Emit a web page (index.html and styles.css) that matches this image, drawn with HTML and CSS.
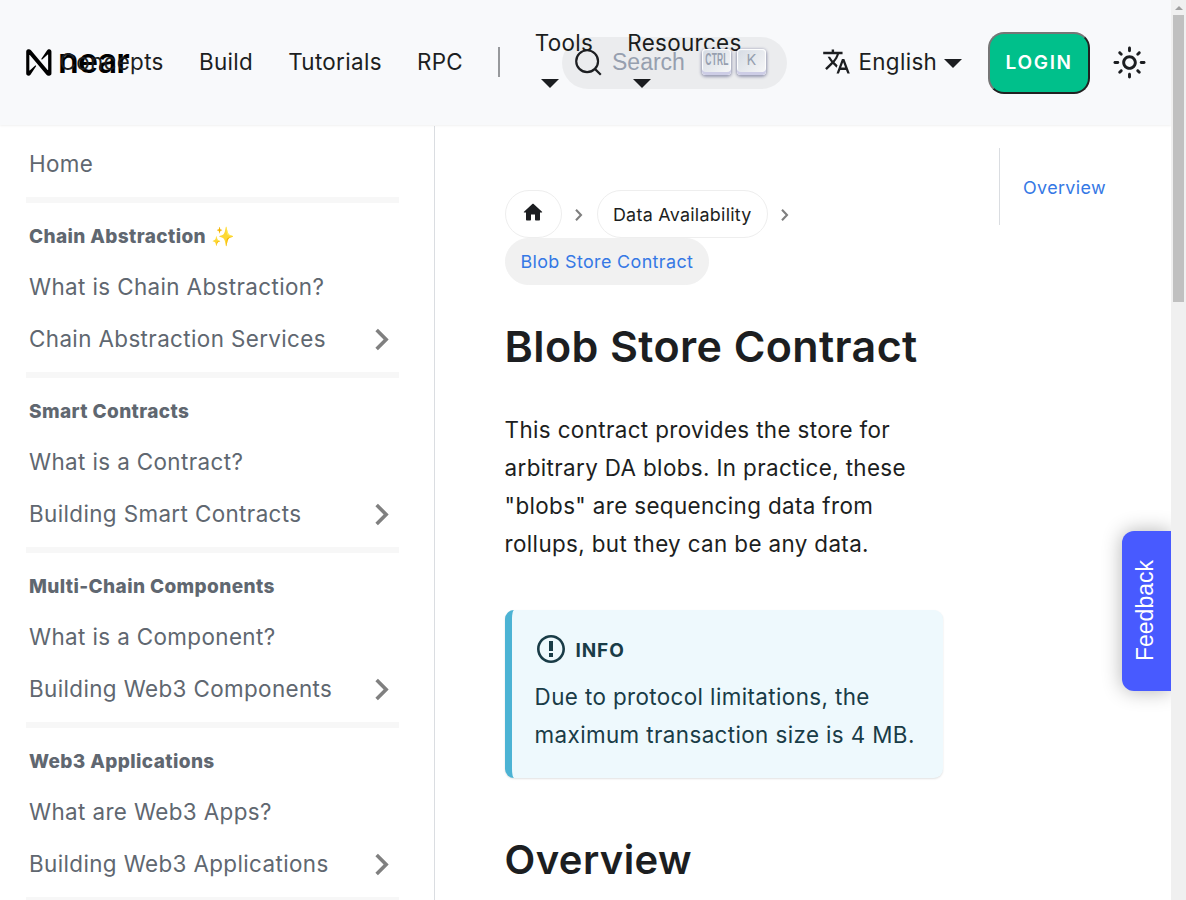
FILE: index.html
```
<!DOCTYPE html>
<html lang="en">
<head>
<meta charset="utf-8">
<title>Blob Store Contract | NEAR Documentation</title>
<link rel="stylesheet" href="styles.css">
</head>
<body>
<div class="window">
<div class="page">
  <header class="navbar">
    <a class="brand">
      <svg class="brand-mark" viewBox="0 0 26 26"><path d="M22.4.2c-.9 0-1.7.5-2.2 1.200l-5.400 8.000c-.3.4.3 1 .8.6l5.300-4.600c.2-.2.4 0 .4.2v14.400c0 .3-.3.400-.5.200L4.800 1.100C4.300.5 3.500.2 2.700.2h-.5C1 .2.2 1.200.2 2.400v21.200c0 1.200 1 2.200 2.200 2.200.8 0 1.500-.4 1.900-1l5.400-8.200c.3-.4-.3-1-.8-.6l-5.300 4.600c-.2.2-.4 0-.4-.2V6c0-.3.3-.4.5-.2l16 19.100c.5.6 1.200.9 1.900.9h.7c1.200 0 2.200-1 2.200-2.200V2.400c0-1.200-.9-2.200-2.100-2.200z"/></svg>
      <span class="brand-name">near</span>
    </a>
    <nav class="nav-links">
      <a class="nav-link">Concepts</a>
      <a class="nav-link">Build</a>
      <a class="nav-link">Tutorials</a>
      <a class="nav-link">RPC</a>
      <span class="nav-divider"></span>
      <a class="nav-link nav-drop">Tools<i class="caret"></i></a>
      <a class="nav-link nav-drop nav-drop-wide">Resources<i class="caret"></i></a>
    </nav>
    <div class="search">
      <svg class="search-icon" viewBox="0 0 20 20"><path d="M14.386 14.386l4.0877 4.0877-4.0877-4.0877c-2.9418 2.9419-7.7115 2.9419-10.6533 0-2.9419-2.9418-2.9419-7.7115 0-10.6533 2.9418-2.9419 7.7115-2.9419 10.6533 0 2.9419 2.9418 2.9419 7.7115 0 10.6533z" fill="none" stroke="currentColor" stroke-width="1.5"/></svg>
      <span class="search-label">Search</span>
      <kbd class="key"><span class="key-ctrl">CTRL</span></kbd>
      <kbd class="key"><span class="key-k">K</span></kbd>
    </div>
    <div class="language">
      <svg class="language-icon" viewBox="0 0 24 24"><path fill="currentColor" d="M12.87 15.07l-2.54-2.51.03-.03c1.740-1.940 2.980-4.170 3.710-6.530H17V4h-7V2H8v2H1v1.990h11.170C11.500 7.920 10.440 9.750 9 11.350 8.070 10.320 7.300 9.190 6.690 8h-2c.73 1.630 1.730 3.170 2.980 4.560l-5.090 5.020L4 19l5-5 3.110 3.110.76-2.040zM18.500 10h-2L12 22h2l1.120-3h4.750L21 22h2l-4.500-12zm-2.620 7l1.620-4.330L19.120 17h-3.240z"/></svg>
      <span class="language-name">English</span><i class="caret"></i>
    </div>
    <button class="login">LOGIN</button>
    <svg class="theme-icon" viewBox="0 0 24 24"><path fill="currentColor" d="M12,9c1.650,0,3,1.350,3,3s-1.350,3-3,3s-3-1.350-3-3S10.350,9,12,9 M12,7c-2.760,0-5,2.240-5,5s2.240,5,5,5s5-2.240,5-5 S14.760,7,12,7L12,7z M2,13l2,0c0.550,0,1-0.450,1-1s-0.450-1-1-1l-2,0c-0.550,0-1,0.450-1,1S1.450,13,2,13z M20,13l2,0c0.550,0,1-0.450,1-1 s-0.450-1-1-1l-2,0c-0.550,0-1,0.450-1,1S19.450,13,20,13z M11,2v2c0,0.550,0.450,1,1,1s1-0.450,1-1V2c0-0.550-0.450-1-1-1S11,1.450,11,2z M11,20v2c0,0.550,0.450,1,1,1s1-0.450,1-1v-2c0-0.550-0.450-1-1-1C11.450,19,11,19.450,11,20z M5.990,4.580c-0.390-0.390-1.030-0.390-1.410,0 c-0.390,0.390-0.390,1.030,0,1.410l1.060,1.060c0.390,0.390,1.030,0.390,1.410,0s0.390-1.030,0-1.410L5.990,4.580z M18.360,16.950 c-0.390-0.390-1.030-0.390-1.410,0c-0.390,0.390-0.390,1.030,0,1.410l1.060,1.060c0.390,0.390,1.030,0.390,1.410,0c0.390-0.390,0.390-1.030,0-1.410 L18.360,16.950z M19.420,5.990c0.390-0.390,0.390-1.030,0-1.410c-0.390-0.390-1.030-0.390-1.410,0l-1.060,1.060c-0.390,0.390-0.390,1.030,0,1.410 s1.030,0.390,1.410,0L19.420,5.990z M7.050,18.360c0.390-0.390,0.390-1.030,0-1.410c-0.390-0.390-1.030-0.390-1.410,0l-1.060,1.060 c-0.390,0.390-0.390,1.030,0,1.410s1.030,0.390,1.410,0L7.050,18.360z"/></svg>
  </header>
  <div class="body">
    <aside class="sidebar">
      <a class="side-link">Home</a>
      <section class="side-group">
        <h4 class="side-title">Chain Abstraction ✨</h4>
        <a class="side-link">What is Chain Abstraction?</a>
        <a class="side-link">Chain Abstraction Services<svg class="side-arrow" viewBox="0 0 24 24"><path d="M10 6L8.590 7.410 13.170 12l-4.580 4.590L10 18l6-6z"/></svg></a>
      </section>
      <section class="side-group">
        <h4 class="side-title">Smart Contracts</h4>
        <a class="side-link">What is a Contract?</a>
        <a class="side-link">Building Smart Contracts<svg class="side-arrow" viewBox="0 0 24 24"><path d="M10 6L8.590 7.410 13.170 12l-4.580 4.590L10 18l6-6z"/></svg></a>
      </section>
      <section class="side-group">
        <h4 class="side-title">Multi-Chain Components</h4>
        <a class="side-link">What is a Component?</a>
        <a class="side-link">Building Web3 Components<svg class="side-arrow" viewBox="0 0 24 24"><path d="M10 6L8.590 7.410 13.170 12l-4.580 4.590L10 18l6-6z"/></svg></a>
      </section>
      <section class="side-group">
        <h4 class="side-title">Web3 Applications</h4>
        <a class="side-link">What are Web3 Apps?</a>
        <a class="side-link">Building Web3 Applications<svg class="side-arrow" viewBox="0 0 24 24"><path d="M10 6L8.590 7.410 13.170 12l-4.580 4.590L10 18l6-6z"/></svg></a>
      </section>
      <section class="side-group"></section>
    </aside>
    <main class="article">
      <nav class="crumbs">
        <a class="crumb crumb-home"><svg class="home-icon" viewBox="0 0 24 24"><path fill="currentColor" d="M10 19v-5h4v5c0 .55.45 1 1 1h3c.55 0 1-.45 1-1v-7h1.700c.46 0 .68-.57.33-.87L12.670 3.600c-.38-.34-.96-.34-1.340 0l-8.360 7.530c-.34.3-.13.87.33.87H5v7c0 .55.45 1 1 1h3c.55 0 1-.45 1-1z"/></svg></a>
        <svg class="crumb-arrow" viewBox="0 0 10 14"><path d="M2 1.800L7 7 2 12.200" fill="none" stroke="#7f7f7f" stroke-width="2.100"/></svg>
        <a class="crumb">Data Availability</a>
        <svg class="crumb-arrow" viewBox="0 0 10 14"><path d="M2 1.800L7 7 2 12.200" fill="none" stroke="#7f7f7f" stroke-width="2.100"/></svg>
        <span class="crumb crumb-active">Blob Store Contract</span>
      </nav>
      <h1 class="title">Blob Store Contract</h1>
      <p class="text">This contract provides the store for arbitrary DA blobs. In practice, these "blobs" are sequencing data from rollups, but they can be any data.</p>
      <div class="info">
        <div class="info-head"><svg class="info-icon" viewBox="0 0 14 16"><path fill="currentColor" fill-rule="evenodd" d="M7 2.300c3.140 0 5.700 2.560 5.700 5.700s-2.560 5.700-5.700 5.700A5.710 5.710 0 0 1 1.300 8c0-3.140 2.560-5.700 5.700-5.700zM7 1C3.140 1 0 4.140 0 8s3.140 7 7 7 7-3.140 7-7-3.140-7-7-7zm1 3H6v5h2V4zm0 6H6v2h2v-2z"/></svg><span class="info-label">INFO</span></div>
        <p class="info-text">Due to protocol limitations, the maximum transaction size is 4 MB.</p>
      </div>
      <h2 class="subtitle">Overview</h2>
    </main>
    <div class="toc"><a class="toc-link">Overview</a></div>
  </div>
  <button class="feedback"><span>Feedback</span></button>
</div>
<div class="scrollbar"><i class="scroll-up"></i><i class="scroll-thumb"></i></div>
</div>
</body>
</html>
```
FILE: styles.css
```
* { box-sizing: border-box; }
body {
  margin: 0;
  background: #fff;
  color: #1c1e21;
  font-family: Inter, "Noto Sans", sans-serif;
  font-size: 22.4px;
  line-height: 38px;
  letter-spacing: .39px;
}
.window { display: flex; width: 1186px; height: 900px; overflow: hidden; }
.page { position: relative; width: 1171px; height: 900px; overflow: hidden; }

.navbar {
  position: relative;
  display: flex;
  align-items: center;
  height: 125px;
  padding: 1px 25px 0 26px;
  background: #f8f9fb;
  box-shadow: 0 1px 2px rgba(0, 0, 0, .06);
  letter-spacing: .33px;
}
.brand { display: flex; align-items: center; flex: none; width: 16px; margin-bottom: 1px; color: #000; }
.brand-mark { flex: none; width: 27px; height: 27px; }
.brand-name { margin: 0 0 4px 5px; font-size: 34px; font-weight: 600; letter-spacing: -.8px; }
.nav-links { display: flex; align-items: center; flex: none; width: 520px; margin-bottom: 2px; }
.nav-link { flex: none; padding: 0 17.6px; }
.nav-divider { flex: none; width: 2px; height: 30px; margin: 0 17.600px 0 17px; background: #97999c; }
.nav-drop { display: flex; flex-direction: column; width: 92.500px; padding-bottom: 12px; }
.nav-drop-wide { width: 150px; }
.caret { width: 0; height: 0; border: 9px solid transparent; border-top-color: currentColor; border-bottom: 0; }
.nav-drop .caret { margin: 17px 0 0 6px; }
.search {
  position: relative;
  display: flex;
  align-items: center;
  flex: none;
  width: 225px;
  height: 52px;
  padding-left: 12px;
  border-radius: 26px;
  background: rgba(0, 0, 0, .05);
}
.search-icon { width: 29px; height: 29px; margin-bottom: 1px; }
.search-label { width: 90px; margin: 0 0 2px 9px; font-family: "Liberation Sans", Arial, sans-serif; font-size: 23px; letter-spacing: 0; color: #969faf; }
.key {
  display: flex;
  align-items: center;
  justify-content: center;
  width: 29px;
  height: 26px;
  margin: 0 6px 3px 0;
  padding-bottom: 4px;
  border-radius: 4px;
  background: linear-gradient(-225deg, #d5dbe4, #f8f8f8);
  box-shadow: inset 0 -3px 0 0 #cdcde6, inset 0 0 1px 1px #fff, 0 1px 3px 1px rgba(30, 35, 90, .4);
  color: #969faf;
}
.key-ctrl { font: bold 16px/16px "Liberation Sans", Arial, sans-serif; transform: scaleX(.53); }
.key-k { font: 14.5px/15px Inter, sans-serif; }
.language { display: flex; align-items: center; flex: none; margin-left: 35px; }
.language-icon { width: 29px; height: 29px; margin: 0 7.500px 3px 0; }
.language-name { margin-bottom: 2px; }
.language .caret { margin: 1px 0 0 7px; }
.login {
  flex: none;
  width: 102px;
  height: 62px;
  margin-left: 26px;
  padding: 0 0 1px;
  border: 2px solid;
  border-color: #767676 #212121 #212121 #767676;
  border-radius: 16px;
  background: #00c08b;
  color: #fff;
  font: 600 19px Inter, sans-serif;
  letter-spacing: 1.700px;
}
.theme-icon { flex: none; width: 35px; height: 35px; margin: 0 0 1px 22px; }

.body { display: flex; align-items: flex-start; height: 774px; margin-top: 1px; }
.sidebar { width: 435px; height: 774px; padding: 12px 35px 0 26px; border-right: 1px solid #dadde1; color: #606770; overflow: hidden; }
.side-link { display: flex; align-items: center; justify-content: space-between; height: 52px; padding: 0 3px; }
.side-arrow { width: 43px; height: 43px; margin: 1px -7px 0 0; fill: #808080; }
.side-group { margin-top: 7px; padding-top: 12px; border-top: 6px solid #f7f7f7; }
.side-title { margin: 0 3px 2px; height: 44px; font-size: 19px; font-weight: 800; line-height: 44px; }

.article { width: 438.600px; margin-left: 69.600px; padding-top: 64px; }
.crumbs { display: flex; flex-wrap: wrap; align-items: center; font-size: 17.9px; letter-spacing: .28px; }
.crumb { display: flex; align-items: center; height: 47.500px; padding: 2px 14.800px 0 14.800px; border: 1px solid #eee; border-radius: 24px; }
.crumb-home { width: 57px; justify-content: center; padding: 0 15px; }
.home-icon { width: 25px; height: 25px; margin: -2px 1px 0 0; }
.crumb-arrow { width: 10px; height: 14px; margin: 2px 13px 0 12.500px; }
.crumb-active { border-color: #f1f1f1; background: #f1f1f1; color: #3578e5; letter-spacing: .38px; }
.title { margin: 35px 0 0; font-size: 43px; font-weight: 600; line-height: 52px; }
.text { margin: 39px -5px 0 0; letter-spacing: .37px; }
.info { margin-top: 47px; height: 168px; padding: 20px 23px; border-left: 7px solid #4cb3d4; border-radius: 9px; background: #eef9fd; color: #193c47; box-shadow: 0 1px 2px rgba(0, 0, 0, .12); }
.info-head { display: flex; align-items: center; height: 38px; font-size: 19px; font-weight: 700; }
.info-icon { width: 28px; height: 32px; margin: 0 10.500px 0 2.400px; }
.info-label { padding-top: 3px; letter-spacing: .9px; }
.info-text { margin: 10px -10px 0 0; }
.subtitle { margin: 57px 0 0; font-size: 40px; font-weight: 600; line-height: 50px; }
.toc { width: 171px; height: 77px; margin: 22px 0 0 55.800px; padding: 19px 0 0 23px; border-left: 1px solid #dadde1; }
.toc-link { color: #3578e5; font-size: 17.900px; }

.feedback {
  position: absolute;
  top: 530.500px;
  right: 0;
  display: flex;
  align-items: center;
  justify-content: center;
  width: 49px;
  height: 160px;
  padding: 0 3px 0 0;
  border: 0;
  border-radius: 12px 0 0 12px;
  background: #485aff;
  box-shadow: 0 0 20px rgba(0, 0, 0, .3);
  color: #fff;
  font: 23px "Liberation Sans", Arial, sans-serif;
}
.feedback span { writing-mode: vertical-rl; transform: rotate(180deg); }

.scrollbar { display: flex; flex-direction: column; align-items: center; width: 15px; height: 900px; padding-top: 6px; background: #f0f0f0; }
.scroll-up { border: 4px solid transparent; border-top: 0; border-bottom-color: #a0a0a0; }
.scroll-thumb { width: 11px; height: 287px; margin-top: 5px; background: #c0c0c0; }
```
